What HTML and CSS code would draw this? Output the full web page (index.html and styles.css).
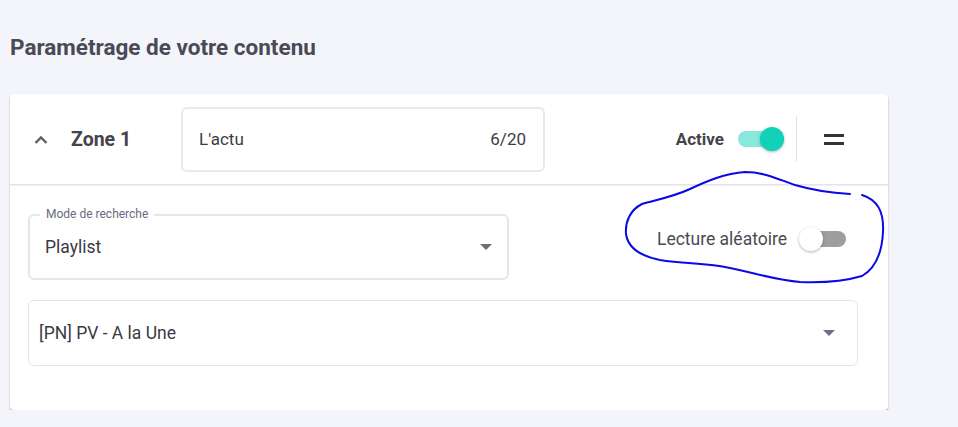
FILE: index.html
```html
<!DOCTYPE html>
<html lang="fr">
<head>
    <meta charset="UTF-8">
    <meta name="viewport" content="width=device-width, initial-scale=1.0">
    <title>Paramétrage de votre contenu</title>
    <link rel="stylesheet" href="styles.css">
</head>
<body>
    <h2 class="page-title">Paramétrage de votre contenu</h2>

    <div class="zone-card">
        <div class="zone-header">
            <svg class="chevron" width="14" height="9" viewBox="0 0 14 9">
                <path d="M1.5 8 L7 2.5 L12.5 8" fill="none" stroke="#5f5f66" stroke-width="2.4"/>
            </svg>
            <span class="zone-name">Zone 1</span>
            <div class="name-field">
                <span>L'actu</span>
                <span class="counter">6/20</span>
            </div>
            <div class="header-actions">
                <span class="active-label">Active</span>
                <div class="switch on"><span class="thumb"></span></div>
                <div class="divider"></div>
                <div class="drag-handle">
                    <span></span>
                    <span></span>
                </div>
            </div>
        </div>

        <div class="zone-body">
            <div class="row">
                <div class="select outlined">
                    <span class="select-label">Mode de recherche</span>
                    <span class="select-value">Playlist</span>
                    <span class="caret"></span>
                </div>
                <div class="shuffle">
                    <span>Lecture aléatoire</span>
                    <div class="switch off"><span class="thumb"></span></div>
                </div>
            </div>
            <div class="select plain">
                <span class="select-value">[PN] PV - A la Une</span>
                <span class="caret muted"></span>
            </div>
        </div>

        <svg class="scribble" width="958" height="427" viewBox="0 0 958 427">
            <path d="M850 194 C832 193 812 190 795 185 C780 180 765 172 745 172 C725 173 705 182 690 189 C675 196 660 199 642 204 C630 210 625 222 626 234 C628 248 640 256 660 260 C685 264 705 263 730 268 C755 273 775 280 800 282 C825 283 845 281 862 276 C876 268 882 252 883 232 C884 212 878 200 862 195"
                  fill="none" stroke="#0a0ae6" stroke-width="2" stroke-linecap="round"/>
        </svg>
    </div>
</body>
</html>
```

FILE: styles.css
```css
body {
    margin: 0;
    padding: 0 10px;
    background-color: #f4f5fa;
    font-family: Roboto, "Liberation Sans", sans-serif;
    color: #46464f;
}
.page-title {
    margin: 0;
    padding: 34px 0 0;
    height: 94px;
    box-sizing: border-box;
    font-size: 22.5px;
    line-height: 26px;
    font-weight: 700;
    color: #4a4a55;
}
.zone-card {
    position: relative;
    width: 878px;
    background-color: white;
    border-radius: 4px;
    box-shadow: 0 2px 2px rgba(0, 0, 0, 0.25), 0 0 2px rgba(0, 0, 0, 0.05);
}
.zone-header {
    display: flex;
    align-items: center;
    height: 90px;
    padding: 0 0 0 24px;
    border-bottom: 1px solid #e3e3e8;
    box-shadow: 0 1px 1px rgba(0, 0, 0, 0.06);
}
.zone-name {
    margin-left: 23px;
    width: 110px;
    font-size: 19.5px;
    font-weight: 700;
    color: #44444c;
}
.name-field {
    display: flex;
    justify-content: space-between;
    align-items: center;
    width: 364px;
    height: 65px;
    box-sizing: border-box;
    padding: 0 17px 0 16px;
    border: 2px solid #e8e8ee;
    border-radius: 6px;
    font-size: 17px;
    color: #3c3c44;
}
.header-actions {
    display: flex;
    align-items: center;
    margin-left: auto;
    height: 100%;
}
.active-label {
    font-size: 17px;
    font-weight: 700;
    color: #44444c;
    margin-right: 14px;
}
.switch {
    position: relative;
    width: 46px;
    height: 16px;
    border-radius: 8px;
}
.switch .thumb {
    position: absolute;
    top: -4px;
    width: 24px;
    height: 24px;
    border-radius: 50%;
    box-shadow: 0 1px 3px rgba(0, 0, 0, 0.3);
}
.switch.on {
    background-color: #88e8dc;
}
.switch.on .thumb {
    right: 0;
    background-color: #12d1b9;
}
.switch.off {
    background-color: #9e9e9e;
}
.switch.off .thumb {
    left: -1px;
    background-color: white;
}
.divider {
    width: 1px;
    height: 46px;
    margin-left: 12px;
    background-color: #e2e2e6;
}
.drag-handle {
    display: flex;
    flex-direction: column;
    gap: 5px;
    width: 20px;
    margin: 0 44px 0 27px;
}
.drag-handle span {
    height: 3px;
    background-color: #333338;
}
.zone-body {
    padding: 29px 30px 44px 18px;
}
.row {
    display: flex;
    align-items: center;
    margin-bottom: 20px;
}
.select {
    position: relative;
    display: flex;
    align-items: center;
    box-sizing: border-box;
    height: 66px;
    border: 2px solid #e6e6ec;
    border-radius: 6px;
}
.select.outlined {
    width: 481px;
    padding: 0 0 0 15px;
}
.select.plain {
    width: 830px;
    padding: 0 0 0 10px;
    border-width: 1px;
    border-color: #e6e6ea;
}
.select-label {
    position: absolute;
    top: -10px;
    left: 10px;
    padding: 0 6px;
    background-color: white;
    font-size: 12px;
    line-height: 16px;
    color: #6a6a80;
}
.select-value {
    font-size: 17.5px;
    color: #3a3a44;
}
.caret {
    margin-left: auto;
    margin-right: 15px;
    width: 0;
    height: 0;
    border-left: 6px solid transparent;
    border-right: 6px solid transparent;
    border-top: 6px solid #6e6e72;
}
.caret.muted {
    margin-right: 22px;
    border-top-color: #6e6e8c;
}
.shuffle {
    display: flex;
    align-items: center;
    margin: 0 12px 17px auto;
    font-size: 17.5px;
    color: #4a4a52;
}
.shuffle .switch {
    margin-left: 13px;
}
.scribble {
    position: absolute;
    top: -94px;
    left: -10px;
    pointer-events: none;
}
```
